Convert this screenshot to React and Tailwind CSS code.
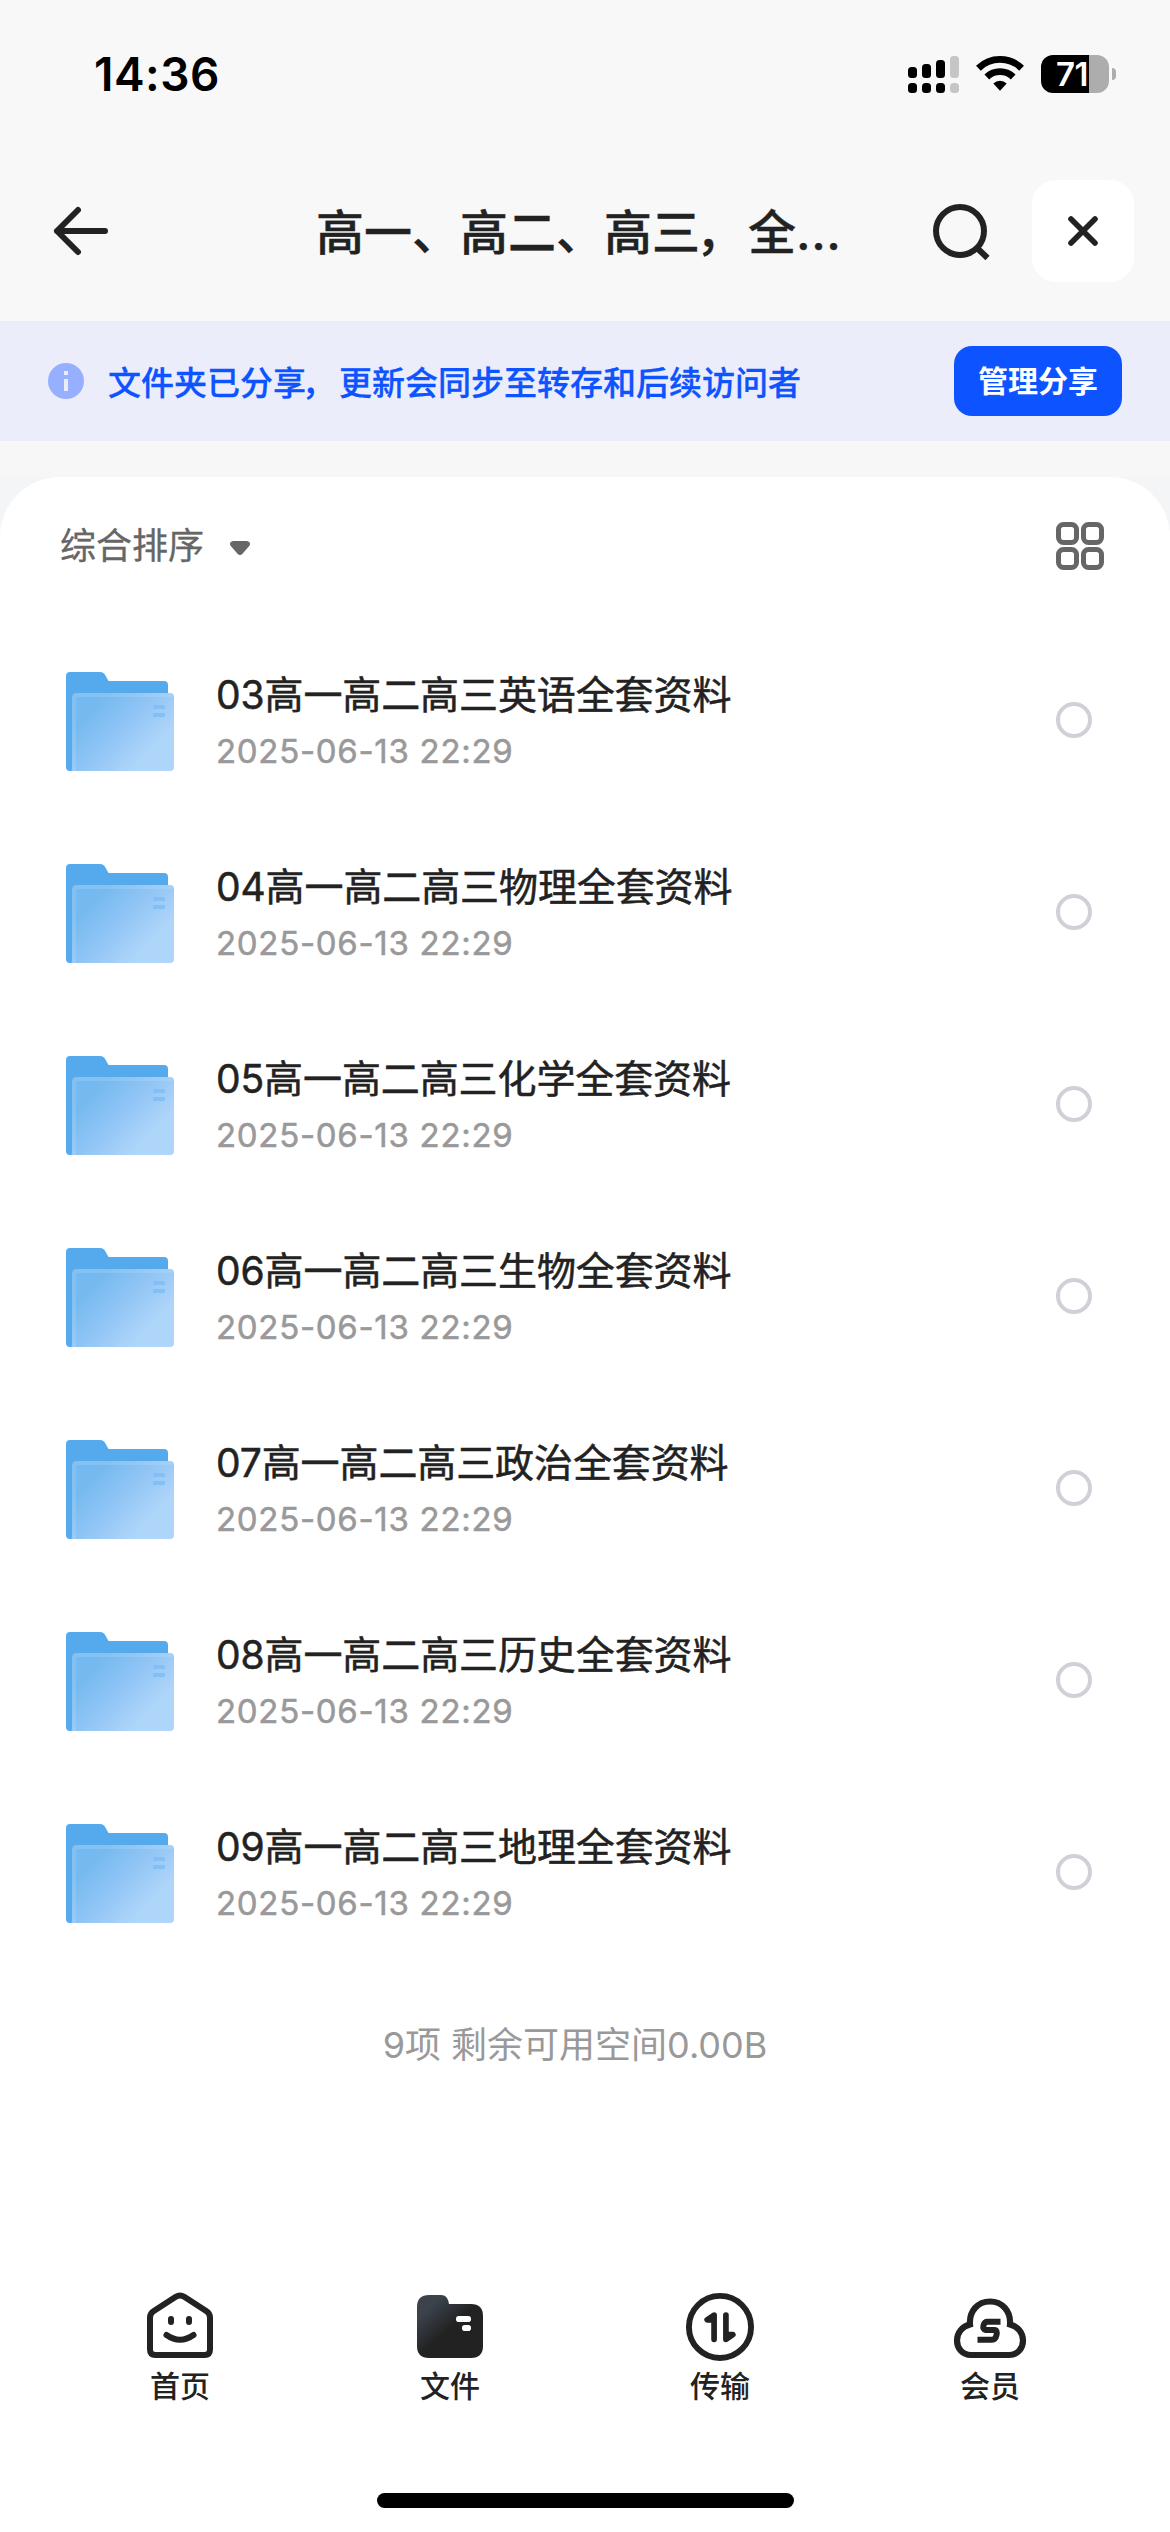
const files = [
  '03高一高二高三英语全套资料',
  '04高一高二高三物理全套资料',
  '05高一高二高三化学全套资料',
  '06高一高二高三生物全套资料',
  '07高一高二高三政治全套资料',
  '08高一高二高三历史全套资料',
  '09高一高二高三地理全套资料',
];

function StatusBar() {
  return (
    <div className="flex h-[150px] items-center justify-between pl-[94px] pr-[54px] text-black">
      <span className="mb-[2px] text-[46px] font-semibold leading-[56px] tracking-[0.5px]">14:36</span>
      <div className="mb-[2px] flex items-center">
        <svg className="h-[38px] w-[52px]" viewBox="0 0 52 38">
          <rect x="0" y="12" width="9" height="11" rx="3.5" />
          <rect x="14" y="9" width="9" height="14" rx="3.5" />
          <rect x="28" y="5" width="9" height="18" rx="3.5" />
          <rect x="42" y="1" width="9" height="22" rx="3.5" fill="#c6c6c6" />
          <rect x="0" y="28" width="9" height="10" rx="3.5" />
          <rect x="14" y="28" width="9" height="10" rx="3.5" />
          <rect x="28" y="28" width="9" height="10" rx="3.5" />
          <rect x="42" y="28" width="9" height="10" rx="3.5" fill="#c6c6c6" />
        </svg>
        <svg className="ml-[16px] h-[38px] w-[48px]" viewBox="0 0 48 38">
          <path d="M2.400 13.200a31 31 0 0 1 43.200 0" fill="none" stroke="#000" strokeWidth="6.8" />
          <path d="M10.800 22a19 19 0 0 1 26.400 0" fill="none" stroke="#000" strokeWidth="6.8" />
          <path d="M17.300 28.400a9.800 9.800 0 0 1 13.400 0L24 35.800Z" />
        </svg>
        <div className="ml-[17px] flex h-[38px] w-[68px] items-center overflow-hidden rounded-[12px] bg-gradient-to-r from-black from-[71%] to-[#adadad] to-[71%] pl-[15px]">
          <span className="text-[33px] font-semibold leading-[38px] tracking-[-0.5px] text-white">71</span>
        </div>
        <span className="ml-[3px] h-[12px] w-[4px] rounded-r-full bg-[#adadad]" />
      </div>
    </div>
  );
}

function Header() {
  return (
    <header className="flex h-[171px] items-start pl-[51px] pr-[36px] pt-[30px] text-[#222]">
      <div className="flex h-[102px] w-full items-center">
        <svg className="h-[60px] w-[60px]" viewBox="0 0 60 60" fill="none" stroke="currentColor" strokeWidth="6" strokeLinecap="round" strokeLinejoin="round">
          <path d="M54 30H6M27 9 6 30l21 21" />
        </svg>
        <h1 className="ml-[205px] mt-[3px] w-[560px] whitespace-nowrap text-[48px] font-medium leading-[60px] [-webkit-text-stroke:0.4px_#222]">
          高一、高二、高三<span className="-ml-[4px] mr-[4px]">，</span>全<span className="tracking-[0.6px]">...</span>
        </h1>
        <svg className="ml-[54px] h-[60px] w-[62px] shrink-0" viewBox="0 0 62 60" fill="none" stroke="currentColor" strokeWidth="6">
          <circle cx="30" cy="30" r="24" />
          <path d="m46 46 11.500 11" />
        </svg>
        <button className="ml-auto flex h-[102px] w-[102px] shrink-0 items-center justify-center rounded-[24px] bg-white">
          <svg className="h-[32px] w-[32px]" viewBox="0 0 32 32" stroke="currentColor" strokeWidth="5.6" strokeLinecap="round">
            <path d="m4 4 24 24M28 4 4 28" />
          </svg>
        </button>
      </div>
    </header>
  );
}

function Banner() {
  return (
    <div className="flex h-[120px] items-center bg-[#ebeefa] pl-[48px] pr-[48px]">
      <svg className="h-[36px] w-[36px]" viewBox="0 0 36 36">
        <circle cx="18" cy="18" r="18" fill="#96afff" />
        <rect x="16" y="8" width="4" height="4" fill="#ebeefa" />
        <rect x="16" y="16" width="4" height="12" fill="#ebeefa" />
      </svg>
      <p className="ml-[24px] mt-[4px] text-[33px] font-medium leading-[48px] text-[#0d53ff] [-webkit-text-stroke:0.3px_#0d53ff]">
        文件夹已分享<span className="-ml-[4px] mr-[4px]">，</span>更新会同步至转存和后续访问者
      </p>
      <button className="ml-auto h-[70px] w-[168px] rounded-[18px] bg-[#0d53ff] text-[30px] font-bold leading-[70px] text-white">管理分享</button>
    </div>
  );
}

function FolderIcon() {
  return (
    <svg className="h-[99px] w-[108px] shrink-0" viewBox="0 0 108 99">
      <defs>
        <linearGradient id="folderFront" x1="12" y1="28" x2="86" y2="99" gradientUnits="userSpaceOnUse">
          <stop offset="0.15" stopColor="#74b9ef" />
          <stop offset="0.5" stopColor="#90c5f5" />
          <stop offset="0.85" stopColor="#aed5fa" />
        </linearGradient>
      </defs>
      <path d="M0 4a4 4 0 0 1 4-4h30q3 0 4.700 2.300L42.500 9H98a4 4 0 0 1 4 4v40L6 99H4a4 4 0 0 1-4-4Z" fill="#55aaee" />
      <path d="M6 25a4 4 0 0 1 4-4h94a4 4 0 0 1 4 4v70a4 4 0 0 1-4 4H5q1-1 1-4Z" fill="url(#folderFront)" />
      <path d="M8 99V27q0-4 4-4h94" fill="none" stroke="#fff" strokeOpacity="0.12" strokeWidth="4" />
      <rect x="87" y="33" width="12" height="4" rx="1.500" fill="#83bff4" />
      <rect x="87" y="41" width="12" height="4" rx="1.500" fill="#83bff4" />
    </svg>
  );
}

function FileRow({ name }) {
  return (
    <li className="flex h-[192px] items-center pl-[66px] pr-[78px]">
      <FolderIcon />
      <div className="ml-[42px] mt-[3px] flex flex-col">
        <span className="text-[39px] leading-[56px] tracking-[-0.1px] text-[#222] [-webkit-text-stroke:0.5px_#222]">{name}</span>
        <span className="text-[33px] leading-[56px] tracking-[0.7px] text-[#999] [-webkit-text-stroke:0.5px_#999]">2025-06-13 22:29</span>
      </div>
      <span className="mb-[2px] ml-auto h-[36px] w-[36px] rounded-full border-[4px] border-[#d0d0d8]" />
    </li>
  );
}

function HomeIcon() {
  return (
    <svg className="h-[72px] w-[72px]" viewBox="0 0 72 72" fill="none" stroke="#222" strokeWidth="6" strokeLinecap="round">
      <path d="M31.800 7.800 9.800 22Q6 24.500 6 28.500v32Q6 66 11.500 66h49Q66 66 66 60.500v-32Q66 24.500 62.200 22L40.200 7.800q-4.200-2.600-8.400 0Z" />
      <path d="M27 30v3M45 30v3" />
      <path d="M22.500 46q13.500 9.500 27 0" />
    </svg>
  );
}

function FilesIcon() {
  return (
    <svg className="h-[72px] w-[72px]" viewBox="0 0 72 72">
      <defs>
        <linearGradient id="filesDark" x1="10" y1="8" x2="37" y2="38" gradientUnits="userSpaceOnUse">
          <stop offset="0.3" stopColor="#3b424b" />
          <stop offset="1" stopColor="#222" />
        </linearGradient>
      </defs>
      <path d="M3 18Q3 6 15 6h12q4 0 6 3 1.500 2.500 2 6h22q12 0 12 12v30q0 12-12 12H15Q3 69 3 57Z" fill="url(#filesDark)" />
      <rect x="42" y="27" width="15" height="6" rx="2.800" fill="#fff" />
      <rect x="48" y="36" width="9" height="6" rx="2.800" fill="#fff" />
    </svg>
  );
}

function TransferIcon() {
  return (
    <svg className="h-[72px] w-[72px]" viewBox="0 0 72 73" fill="#222" stroke="#222" strokeLinecap="round" strokeLinejoin="round">
      <circle cx="36" cy="38.500" r="31.500" fill="none" strokeWidth="6" />
      <path d="M30 51V26.500L23 31.200H30" strokeWidth="5.800" />
      <path d="M42 26.500V51L49 46.300H42" strokeWidth="5.800" />
    </svg>
  );
}

function MemberIcon() {
  return (
    <svg className="h-[72px] w-[72px] overflow-visible" viewBox="0 0 72 72" fill="none" stroke="#222">
      <path d="M17 66C8 66 3 59 3 51.500 3 44 8 37.500 16 35.500 15 22 24 12.500 36 12.500S57 22 56 35.500C64 37.500 69 44 69 51.500 69 59 64 66 55 66Z" strokeWidth="6.200" />
      <path d="M46.500 32.800H33.500Q30.500 32.800 29.500 36.500T32 41H40.500Q43.500 41 42.500 46 41.500 50.800 38 50.800H23.500" strokeWidth="6" />
    </svg>
  );
}

const tabs = [
  ['首页', HomeIcon],
  ['文件', FilesIcon],
  ['传输', TransferIcon],
  ['会员', MemberIcon],
];

export default function App() {
  return (
    <div lang="zh-CN" className="flex h-[2532px] w-[1170px] flex-col overflow-hidden bg-[#f8f8f8] font-['Inter','Noto_Sans_CJK_SC',sans-serif]">
      <StatusBar />
      <Header />
      <Banner />
      <div className="h-[36px] shrink-0 bg-[#f7f7f7]" />
      <div className="flex grow flex-col bg-[#f4f5f7]">
        <main className="flex grow flex-col rounded-t-[60px] bg-white">
          <div className="flex h-[148px] shrink-0 items-start justify-between pl-[60px] pr-[66px] pt-[45px]">
            <button className="flex h-[48px] items-center text-[36px] leading-[48px] text-[#666] [-webkit-text-stroke:0.3px_#666]">
              综合排序
              <svg className="ml-[26px] mt-[3px] h-[14px] w-[20px]" viewBox="0 0 20 14" fill="currentColor">
                <path d="M3 0h14q3 .5 3 3 0 1.200-1 2.300l-6.500 7.500q-2.500 2.400-5 0L1 5.300Q0 4.200 0 3 0 .5 3 0Z" />
              </svg>
            </button>
            <svg className="h-[48px] w-[48px]" viewBox="0 0 48 48" fill="none" stroke="#666" strokeWidth="5">
              <rect x="2.500" y="2.500" width="18" height="18" rx="5" />
              <rect x="27.500" y="2.500" width="18" height="18" rx="5" />
              <rect x="2.500" y="27.500" width="18" height="18" rx="5" />
              <rect x="27.500" y="27.500" width="18" height="18" rx="5" />
            </svg>
          </div>
          <ul className="flex flex-col">
            {files.map((name) => (
              <FileRow key={name} name={name} />
            ))}
          </ul>
          <p className="mt-[52px] pr-[20px] text-center text-[36px] leading-[48px] text-[#999]">9项 剩余可用空间0.00B</p>
          <nav className="mt-auto grid h-[204px] grid-cols-4 px-[45px]">
            {tabs.map(([label, Icon]) => (
              <div key={label} className="flex flex-col items-center">
                <Icon />
                <span className="mt-[5px] text-[30px] font-medium leading-[40px] text-[#222]">{label}</span>
              </div>
            ))}
          </nav>
          <div className="mb-[24px] h-[15px] w-[417px] self-center rounded-full bg-black" />
        </main>
      </div>
    </div>
  );
}
